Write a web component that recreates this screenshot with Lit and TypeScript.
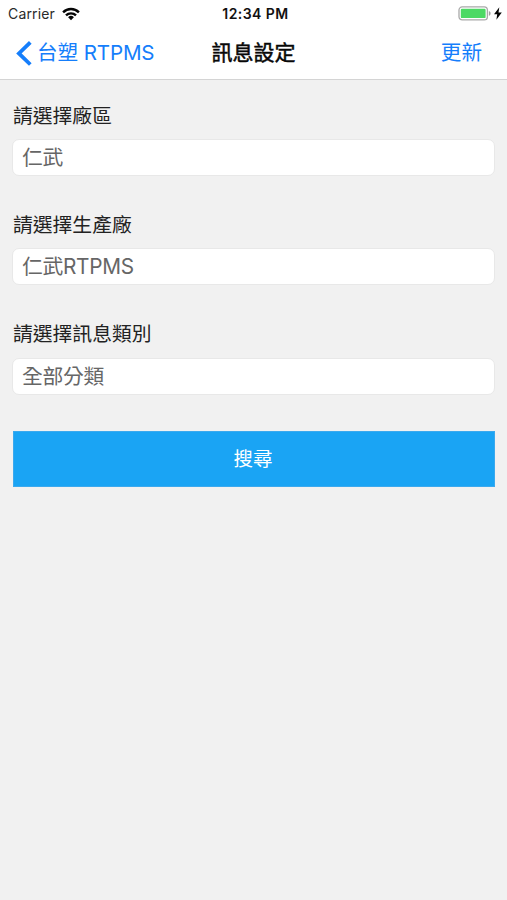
import { LitElement, html, css } from "lit";
import { customElement, property } from "lit/decorators.js";

@customElement("status-bar")
class StatusBar extends LitElement {
  static styles = css`
    :host {
      display: grid;
      grid-template-columns: 1fr auto 1fr;
      align-items: center;
      height: 27px;
      padding: 0 5px 0 8px;
      box-sizing: border-box;
      color: #111;
      font-size: 14px;
      line-height: 27px;
    }
    .left, .right { display: flex; align-items: center; }
    .carrier { font-size: 14px; letter-spacing: 0.15px; width: 54px; white-space: nowrap; color: #2a2a2a; }
    .right { justify-content: flex-end; }
    .time { font-weight: 600; font-size: 14px; letter-spacing: 0.45px; padding-left: 1px; line-height: 27px; }
    svg { display: block; }
    .bolt { margin-left: 3px; }
  `;
  render() {
    return html`
      <div class="left">
        <span class="carrier">Carrier</span>
        <svg width="18" height="14" viewBox="0 0 18 14">
          <g fill="none" stroke="#050505" stroke-width="2.4">
            <path d="M1.1 5.3a11.2 11.2 0 0 1 15.8 0" />
            <path d="M4 8.4a7.1 7.1 0 0 1 10 0" />
          </g>
          <path fill="#050505" d="M6.1 10.3a4.1 4.1 0 0 1 5.8 0L9 13.2z" />
        </svg>
      </div>
      <div class="time">12:34 PM</div>
      <div class="right">
        <svg width="33" height="15" viewBox="0 0 33 15">
          <rect x="1" y="0.9" width="28.4" height="13" rx="3.2" fill="#fff" stroke="#a9a9a9" stroke-width="1.3" />
          <rect x="2.8" y="2.7" width="24.8" height="9.4" rx="1.2" fill="#4cd964" />
          <path d="M30.9 5.1c1.2.4 1.7 1.3 1.7 2.3s-.5 1.9-1.7 2.3z" fill="#a0a0a0" />
        </svg>
        <svg class="bolt" width="8" height="13" viewBox="0 0 8 13">
          <path d="M5.3.3 0 7.3h3.2L2.4 12.7 7.8 5.4H4.5z" fill="#050505" />
        </svg>
      </div>
    `;
  }
}

@customElement("nav-bar")
class NavBar extends LitElement {
  static styles = css`
    :host {
      display: grid;
      grid-template-columns: 1fr auto 1fr;
      align-items: center;
      height: 52px;
      padding: 0 25px 0 16px;
      box-sizing: border-box;
      font-size: 20.6px;
      line-height: 30px;
      color: #157efb;
    }
    .back { display: flex; align-items: center; gap: 4px; white-space: nowrap; }
    .latin { letter-spacing: -0.2px; }
    .title {
      color: #080808;
      font-size: 21px;
      padding-left: 9px;
      -webkit-text-stroke: 0.5px #080808;
    }
    .update { text-align: right; }
    svg { display: block; }
  `;
  render() {
    return html`
      <div class="back">
        <svg width="17" height="27" viewBox="0 0 17 27">
          <path d="M14.3 2.3 2.9 13.4 14.3 24.5" fill="none" stroke="#157efb" stroke-width="3.8" />
        </svg>
        <span>台塑<span class="latin"> RTPMS</span></span>
      </div>
      <div class="title">訊息設定</div>
      <div class="update">更新</div>
    `;
  }
}

@customElement("select-field")
class SelectField extends LitElement {
  @property() label = "";
  @property() value = "";
  static styles = css`
    :host { display: block; height: 109.2px; }
    .label { font-size: 19.8px; line-height: 30px; color: #222; padding-left: 1px; }
    .value {
      box-sizing: border-box;
      height: 37px;
      margin-top: 8.2px;
      padding-left: 9px;
      border: 1px solid #e8e8e8;
      border-radius: 7px;
      background: #fff;
      color: #666;
      font-size: 20.8px;
      letter-spacing: -0.3px;
      line-height: 35px;
    }
  `;
  render() {
    return html`
      <div class="label">${this.label}</div>
      <div class="value">${this.value}</div>
    `;
  }
}

@customElement("app-root")
class AppRoot extends LitElement {
  static styles = css`
    :host {
      display: block;
      height: 900px;
      background: #f1f1f1;
      font-family: Inter, "Noto Sans CJK TC", sans-serif;
    }
    header { background: #fff; border-bottom: 1px solid #d4d4d4; }
    main { padding: 21px 12px 0; }
    .search {
      box-sizing: border-box;
      display: block;
      width: calc(100% - 1px);
      height: 56.4px;
      padding: 0 2px 2px 0;
      margin: 2px 0 0 1px;
      border: 1px solid #3ba9ee;
      background: #1aa4f4;
      color: #fff;
      font-family: inherit;
      font-size: 19.5px;
    }
  `;
  private fields = [
    { label: "請選擇廠區", value: "仁武" },
    { label: "請選擇生產廠", value: "仁武RTPMS" },
    { label: "請選擇訊息類別", value: "全部分類" },
  ];
  render() {
    return html`
      <header>
        <status-bar></status-bar>
        <nav-bar></nav-bar>
      </header>
      <main>
        ${this.fields.map((f) => html`<select-field .label=${f.label} .value=${f.value}></select-field>`)}
        <button class="search">搜尋</button>
      </main>
    `;
  }
}
